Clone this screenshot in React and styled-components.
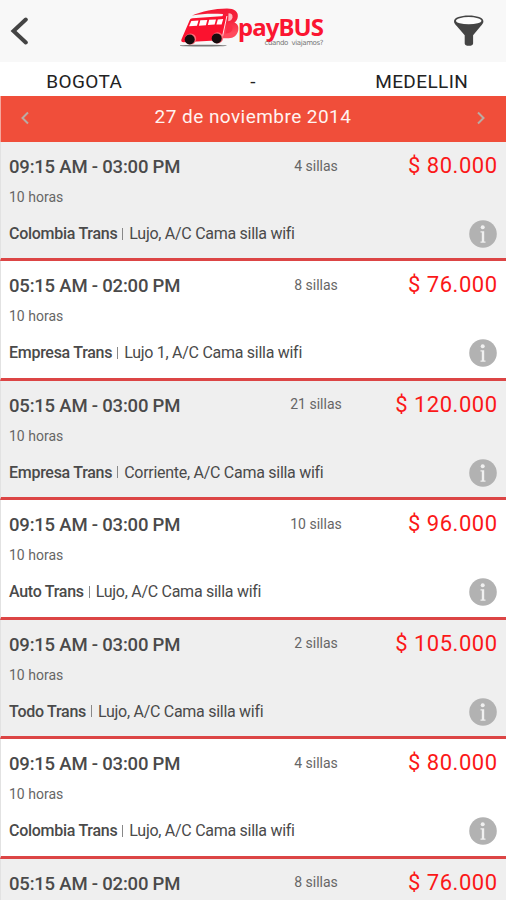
import styled, { createGlobalStyle } from "styled-components";

const trips = [
  { time: "09:15 AM - 03:00 PM", seats: "4 sillas", price: "$ 80.000", company: "Colombia Trans", service: "Lujo, A/C Cama silla wifi" },
  { time: "05:15 AM - 02:00 PM", seats: "8 sillas", price: "$ 76.000", company: "Empresa Trans", service: "Lujo 1, A/C Cama silla wifi" },
  { time: "05:15 AM - 03:00 PM", seats: "21 sillas", price: "$ 120.000", company: "Empresa Trans", service: "Corriente, A/C Cama silla wifi" },
  { time: "09:15 AM - 03:00 PM", seats: "10 sillas", price: "$ 96.000", company: "Auto Trans", service: "Lujo, A/C Cama silla wifi" },
  { time: "09:15 AM - 03:00 PM", seats: "2 sillas", price: "$ 105.000", company: "Todo Trans", service: "Lujo, A/C Cama silla wifi" },
  { time: "09:15 AM - 03:00 PM", seats: "4 sillas", price: "$ 80.000", company: "Colombia Trans", service: "Lujo, A/C Cama silla wifi" },
  { time: "05:15 AM - 02:00 PM", seats: "8 sillas", price: "$ 76.000" },
];

const Chevron = ({ flip }) => (
  <svg width="8" height="14" viewBox="0 0 8 14" fill="none">
    <path
      d={flip ? "M1 1.5 6.5 7 1 12.5" : "M7 1.5 1.5 7 7 12.5"}
      stroke="#b9aba4"
      strokeWidth="2"
    />
  </svg>
);

const BusLogo = () => (
  <svg width="62" height="42" viewBox="0 0 62 42">
    <defs>
      <linearGradient id="swoosh" x1="0" y1="0" x2="0.3" y2="1">
        <stop offset="0" stopColor="#f31632" />
        <stop offset="0.6" stopColor="#f5233c" />
        <stop offset="1" stopColor="#ff4a5c" />
      </linearGradient>
    </defs>
    <ellipse cx="23" cy="37.600" rx="24" ry=".9" fill="#777" />
    <path
      d="M12 7.500C22 3.600 34 .6 47 .6c7.500 0 11.300 3.300 10.800 8-.3 3-1.400 4.600-3.400 6 3.200 1.400 4.600 4 3.800 8-1.100 5.200-4.600 7.800-10.200 7.600H38L43 6c-10-.7-21-.5-31 1.500z"
      fill="url(#swoosh)"
    />
    <path d="M48.500 5.300c3 .1 4.300 1.400 4 4-.3 2.200-1.700 3.500-4.300 3.900z" fill="#ffb5bc" />
    <path d="M47.500 16.500c3.600 0 5.500 1.600 5 4.500-.5 2.800-2.700 4.300-7 4.400z" fill="#fb2d45" />
    <path
      d="M12.500 10.300 44.500 8c2-.1 2.800.8 2.400 2.800L42.600 30c-.4 1.500-1 2.200-2.500 2.200L3.500 34.200c-1.800 0-2.600-1-2.100-2.800L9.800 12c.5-1.100 1.300-1.600 2.700-1.700z"
      fill="#fb122f"
    />
    <path d="M46.900 8 42.200 30" stroke="#fff" strokeWidth=".9" fill="none" />
    <g fill="#fff">
      <path d="m11.300 13 7.200-.6-1.500 5.400-8 .4z" />
      <path d="m20.300 12.300 7-.4-1.400 5.400-7 .4z" />
      <path d="m29.200 11.800 6.800-.4-1.400 5.200-6.800.4z" />
      <path d="m37.800 11.400 5.400-.4-1.600 5.400-5.200.2z" />
    </g>
    <circle cx="10.600" cy="31" r="5.600" fill="#ff6a78" />
    <circle cx="9.700" cy="31.500" r="5" fill="#160c0e" />
    <circle cx="37.600" cy="29.900" r="5.600" fill="#ff6a78" />
    <circle cx="36.700" cy="30.400" r="5" fill="#160c0e" />
  </svg>
);

const Funnel = () => (
  <svg width="32" height="32" viewBox="0 0 32 32">
    <path
      d="M1 6.200C1 2.800 7.500.6 15.700.6s14.700 2.200 14.700 5.600c0 2-1.300 3.300-2.600 4.800l-7.700 9.300v8.200c0 1.600-1.800 2.300-4.200 2.300s-4.200-.7-4.200-2.300v-8.200L3.700 11C2.400 9.500 1 8.200 1 6.200z"
      fill="#444"
    />
    <ellipse cx="15.700" cy="5.700" rx="12.700" ry="3.600" fill="#fdfdfd" />
  </svg>
);

const InfoIcon = () => (
  <svg width="28" height="28" viewBox="0 0 28 28">
    <circle cx="14" cy="14" r="13.800" fill="#b2b2b2" />
    <circle cx="13.700" cy="7.300" r="2" fill="#f0f0f0" />
    <path d="M11.500 11.300h3.700v10.200h1.300v1.200h-5v-1.200h1.300v-9h-1.300z" fill="#f0f0f0" />
  </svg>
);

const App = () => {
  return (
    <>
      <GlobalStyle />
      <Screen>
        <Header>
          <IconButton aria-label="Volver">
            <svg width="18" height="28" viewBox="0 0 18 28" fill="none">
              <path d="M15.800 2.500 3.500 14l12.300 11.500" stroke="#444" strokeWidth="4" strokeLinecap="round" />
            </svg>
          </IconButton>
          <Brand>
            <BusLogo />
            <BrandText>
              <strong>payBUS</strong>
              <small>cuando&nbsp; viajamos?</small>
            </BrandText>
          </Brand>
          <IconButton aria-label="Filtrar">
            <Funnel />
          </IconButton>
        </Header>
        <Route>
          <City>BOGOTA</City>
          <City>-</City>
          <City>MEDELLIN</City>
        </Route>
        <DateBar>
          <Chevron />
          <DateText>27 de noviembre 2014</DateText>
          <Chevron flip />
        </DateBar>
        <TripList>
          {trips.map((trip, index) => (
            <Trip key={index} $shaded={index % 2 === 0}>
              <TripTop>
                <Time>{trip.time}</Time>
                <Seats>{trip.seats}</Seats>
                <Price>{trip.price}</Price>
              </TripTop>
              {trip.company && (
                <>
                  <Duration>10 horas</Duration>
                  <TripBottom>
                    <Service>
                      <b>{trip.company}</b>
                      <i />
                      <span>{trip.service}</span>
                    </Service>
                    <InfoIcon />
                  </TripBottom>
                </>
              )}
            </Trip>
          ))}
        </TripList>
      </Screen>
    </>
  );
};

export default App;

const GlobalStyle = createGlobalStyle`
  * {
    box-sizing: border-box;
  }
  body {
    margin: 0;
    overflow: hidden;
    font-family: Roboto, "Liberation Sans", sans-serif;
    color: #4a4a4a;
  }
  svg {
    display: block;
    flex: none;
  }
`;

const Screen = styled.div`
  display: flex;
  flex-direction: column;
  height: 900px;
  overflow: hidden;
  background: #fff;
`;

const Header = styled.header`
  display: flex;
  flex: none;
  justify-content: space-between;
  align-items: center;
  height: 62px;
  padding: 0 21px 0 10px;
  background: #f8f8f8;
`;

const IconButton = styled.button`
  padding: 0;
  border: 0;
  background: none;
`;

const Brand = styled.div`
  display: flex;
  align-items: flex-start;
  height: 46px;
  margin-left: 22px;
`;

const BrandText = styled.div`
  display: flex;
  flex-direction: column;
  width: 85px;
  margin-left: -4px;
  padding-top: 4px;
  strong {
    font: 700 24px/29px "Noto Sans", sans-serif;
    letter-spacing: -0.9px;
    color: #fb1531;
    white-space: nowrap;
  }
  small {
    align-self: flex-end;
    margin-top: -2px;
    font: 7px/8px "DejaVu Sans", sans-serif;
    letter-spacing: -0.4px;
    color: #777;
    white-space: nowrap;
  }
`;

const Route = styled.div`
  display: grid;
  flex: none;
  grid-template-columns: 1fr 1fr 1fr;
  align-items: center;
  height: 34px;
  padding-top: 6px;
  text-align: center;
`;

const City = styled.span`
  font-size: 19px;
  letter-spacing: 0.4px;
  line-height: 28px;
  color: #222;
`;

const DateBar = styled.div`
  display: flex;
  flex: none;
  justify-content: space-between;
  align-items: center;
  height: 46px;
  padding: 0 21px 2px 20px;
  border-left: 1px solid #f5a79c;
  background: #f04e3a;
`;

const DateText = styled.span`
  padding-bottom: 3px;
  font-size: 19px;
  letter-spacing: 0.45px;
  color: #fff3f0;
`;

const TripList = styled.div`
  display: flex;
  flex-direction: column;
`;

const Trip = styled.article`
  display: flex;
  flex: none;
  flex-direction: column;
  height: 119.450px;
  padding: 11px 9px 0 8px;
  border-left: 1px solid #e2e2e2;
  border-bottom: 3px solid #dc4545;
  background: ${(props) => (props.$shaded ? "#efefef" : "#fff")};
`;

const TripTop = styled.div`
  display: grid;
  grid-template-columns: 245px 124px 1fr;
  height: 26px;
  align-items: center;
`;

const Time = styled.span`
  padding-top: 2px;
  font-size: 18.500px;
  font-weight: 500;
  letter-spacing: -0.2px;
  white-space: nowrap;
`;

const Seats = styled.span`
  padding-bottom: 1px;
  font-size: 14px;
  text-align: center;
  color: #666;
`;

const Price = styled.span`
  justify-self: end;
  padding-bottom: 1px;
  font-size: 22px;
  letter-spacing: 0.5px;
  margin-right: -0.5px;
  color: #fb1818;
  white-space: nowrap;
`;

const Duration = styled.span`
  margin-top: 9px;
  font-size: 14px;
  line-height: 18px;
  color: #666;
`;

const TripBottom = styled.div`
  display: flex;
  justify-content: space-between;
  align-items: center;
  margin-top: 14px;
`;

const Service = styled.div`
  display: flex;
  align-items: center;
  padding-bottom: 1px;
  font-size: 16px;
  letter-spacing: -0.28px;
  white-space: nowrap;
  b {
    font-weight: 500;
  }
  i {
    width: 1px;
    height: 12px;
    margin: 0 6px 0 5px;
    background: #888;
  }
`;
